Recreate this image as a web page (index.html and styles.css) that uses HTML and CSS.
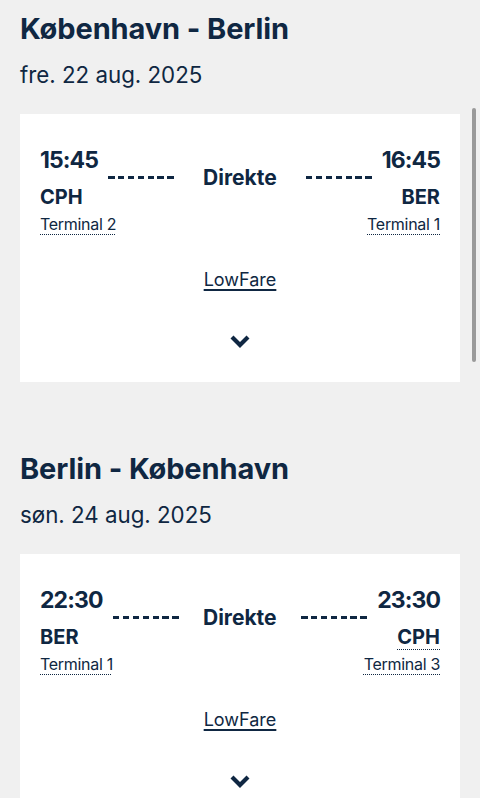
FILE: index.html
```html
<!DOCTYPE html>
<html lang="da">
<head>
<meta charset="utf-8">
<title>Flyrejse</title>
<link rel="stylesheet" href="styles.css">
</head>
<body>
<main class="page">
  <section class="leg">
    <h2 class="route">København - Berlin</h2>
    <p class="date">fre. 22 aug. 2025</p>
    <div class="card">
      <div class="flight">
        <div class="end">
          <div class="time">15:45</div>
          <div class="code">CPH</div>
        </div>
        <div class="middle">
          <span class="dashes"></span>
          <span class="direct">Direkte</span>
          <span class="dashes"></span>
        </div>
        <div class="end end-right">
          <div class="time">16:45</div>
          <div class="code">BER</div>
        </div>
      </div>
      <div class="terminals">
        <span class="terminal">Terminal 2</span>
        <span class="terminal">Terminal 1</span>
      </div>
      <a class="fare" href="#">LowFare</a>
      <div class="toggle">
        <svg width="22" height="14" viewBox="0 0 22 14" aria-hidden="true"><path d="M3 3 L11 11 L19 3" fill="none" stroke="currentColor" stroke-width="4.2" stroke-linecap="butt" stroke-linejoin="miter"/></svg>
      </div>
    </div>
  </section>
  <section class="leg">
    <h2 class="route">Berlin - København</h2>
    <p class="date">søn. 24 aug. 2025</p>
    <div class="card">
      <div class="flight">
        <div class="end">
          <div class="time">22:30</div>
          <div class="code">BER</div>
        </div>
        <div class="middle">
          <span class="dashes"></span>
          <span class="direct">Direkte</span>
          <span class="dashes"></span>
        </div>
        <div class="end end-right">
          <div class="time">23:30</div>
          <div class="code"><span class="abbr">CPH</span></div>
        </div>
      </div>
      <div class="terminals">
        <span class="terminal">Terminal 1</span>
        <span class="terminal">Terminal 3</span>
      </div>
      <a class="fare" href="#">LowFare</a>
      <div class="toggle">
        <svg width="22" height="14" viewBox="0 0 22 14" aria-hidden="true"><path d="M3 3 L11 11 L19 3" fill="none" stroke="currentColor" stroke-width="4.2" stroke-linecap="butt" stroke-linejoin="miter"/></svg>
      </div>
    </div>
  </section>
</main>
<div class="scrollbar"></div>
</body>
</html>
```
FILE: styles.css
```css
* { box-sizing: border-box; }
html, body { margin: 0; padding: 0; }
body {
  background: #f0f0f0;
  color: #0f2742;
  font-family: Inter, "Noto Sans", "Liberation Sans", sans-serif;
  overflow: hidden;
}
.page { padding: 0 20px; }
.leg { padding: 11px 0 58px; }
.route {
  margin: 0;
  font-size: 29px;
  line-height: 36px;
  font-weight: 700;
  letter-spacing: -0.1px;
}
.date {
  margin: 14px 0 0;
  font-size: 22.3px;
  line-height: 28px;
  font-weight: 400;
}
.card {
  margin-top: 25px;
  background: #ffffff;
  height: 268px;
  padding: 32px 20px 0;
}
.flight {
  display: flex;
  align-items: center;
}
.end { display: flex; flex-direction: column; }
.end-right { align-items: flex-end; }
.time {
  font-size: 23px;
  line-height: 28px;
  font-weight: 700;
  letter-spacing: -0.9px;
}
.code {
  margin-top: 11px;
  font-size: 20px;
  line-height: 24px;
  font-weight: 700;
}
.abbr {
  text-decoration: underline dotted 1px;
  text-underline-offset: 5px;
}
.middle {
  flex: 1;
  display: flex;
  align-items: center;
  justify-content: space-between;
  padding: 0 10px;
}
.dashes {
  width: 66px;
  height: 3px;
  background: repeating-linear-gradient(90deg, currentColor 0 6.5px, transparent 6.5px 9.9px);
}
.direct {
  font-size: 21px;
  line-height: 24px;
  font-weight: 700;
}
.terminals {
  margin-top: 5px;
  display: flex;
  justify-content: space-between;
  font-size: 16px;
  line-height: 20px;
  letter-spacing: -0.3px;
}
.terminal {
  text-decoration: underline dotted 1px;
  text-underline-offset: 4px;
}
.fare {
  display: block;
  width: max-content;
  margin: 35px auto 0;
  font-size: 18px;
  line-height: 22px;
  color: inherit;
  text-decoration: underline 1.5px;
  text-underline-offset: 3px;
}
.toggle {
  margin-top: 43px;
  display: flex;
  justify-content: center;
}
.toggle svg { display: block; }
.scrollbar {
  position: fixed;
  right: 4px;
  top: 108px;
  width: 4px;
  height: 254px;
  border-radius: 2px;
  background: #9a9a9a;
}
```
